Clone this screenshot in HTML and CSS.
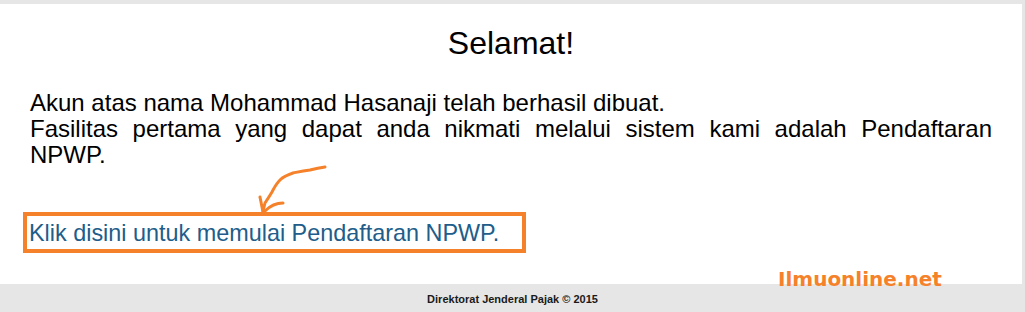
FILE: index.html
```html
<!DOCTYPE html>
<html>
<head>
<meta charset="utf-8">
<link rel="stylesheet" href="styles.css">
</head>
<body>
<div class="page">
  <main class="content">
    <h1 class="title">Selamat!</h1>
    <div class="message">
      <p class="line">Akun atas nama Mohammad Hasanaji telah berhasil dibuat.</p>
      <p class="line justify">Fasilitas pertama yang dapat anda nikmati melalui sistem kami adalah Pendaftaran NPWP.</p>
    </div>
    <div class="cta">
      <a class="cta-link" href="#">Klik disini untuk memulai Pendaftaran NPWP.</a>
      <svg class="arrow" width="80" height="60" viewBox="0 0 80 60" aria-hidden="true">
        <path d="M75 7 C68 8 64 9 60 10 C52 11 48 12 43 13 C37 15 33 17 30 20 C26 24 24 28 22 32 C19 37 17 40 15 43 C14 47 13 50 13 52" fill="none" stroke="#f5822a" stroke-width="3" stroke-linecap="round"/>
        <path d="M10 37 C11 42 12 47 13 52" fill="none" stroke="#f5822a" stroke-width="3" stroke-linecap="round"/>
        <path d="M33 43 C27 43 20 46 15 51" fill="none" stroke="#f5822a" stroke-width="3" stroke-linecap="round"/>
      </svg>
    </div>
    <div class="watermark">Ilmuonline.net</div>
  </main>
  <footer class="footer">Direktorat Jenderal Pajak © 2015</footer>
</div>
</body>
</html>
```

FILE: styles.css
```css
html, body {
  margin: 0;
  padding: 0;
}
body {
  background: #e6e6e6;
  font-family: "Liberation Sans", Arial, sans-serif;
  color: #000;
}
.page {
  padding-top: 4px;
  width: 1025px;
  height: 312px;
  overflow: hidden;
  box-sizing: border-box;
}
.content {
  position: relative;
  background: #fff;
  width: 1022px;
  height: 280px;
  box-sizing: border-box;
  padding: 0 30px;
}
.title {
  margin: 0;
  padding-top: 21px;
  font-weight: normal;
  font-size: 32px;
  line-height: 37px;
  text-align: center;
}
.message {
  margin-top: 28px;
  font-size: 24px;
  line-height: 26px;
}
.line {
  margin: 0;
}
.justify {
  text-align: justify;
}
.cta {
  position: relative;
  margin-top: 44px;
  margin-left: -7px;
}
.cta-link {
  display: inline-block;
  width: 493px;
  height: 33px;
  border: 4px solid #f5822a;
  padding: 0 0 0 2px;
  color: #215d8a;
  text-decoration: none;
  font-size: 23.4px;
  line-height: 34px;
}
.arrow {
  position: absolute;
  left: 227px;
  top: -52px;
}
.watermark {
  position: absolute;
  left: 778px;
  top: 263px;
  font-family: "DejaVu Sans", Verdana, sans-serif;
  font-weight: bold;
  font-size: 20px;
  color: #f5822a;
  z-index: 2;
}
.footer {
  height: 28px;
  padding-top: 9px;
  box-sizing: border-box;
  text-align: center;
  font-size: 11px;
  font-weight: bold;
  color: #1a1a1a;
}
```
